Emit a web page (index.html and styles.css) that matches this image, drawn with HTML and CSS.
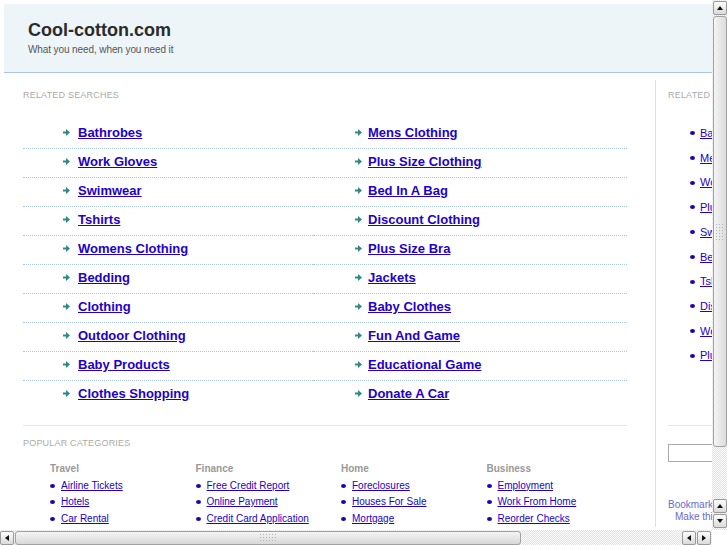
FILE: index.html
```html
<!DOCTYPE html>
<html lang="en">
<head>
    <meta charset="UTF-8">
    <title>Cool-cotton.com</title>
    <link rel="stylesheet" href="styles.css">
</head>
<body>
    <div class="page">
        <div class="header">
            <h1>Cool-cotton.com</h1>
            <p class="tagline">What you need, when you need it</p>
        </div>

        <div class="content">
            <div class="main">
                <div class="label">Related Searches</div>
                <ul class="links">
                    <li><svg class="arr" viewBox="0 0 7 7"><path d="M0 2.5h3V0l4 3.5L3 7V4.5H0z"/></svg><a href="#">Bathrobes</a></li>
                    <li><svg class="arr" viewBox="0 0 7 7"><path d="M0 2.5h3V0l4 3.5L3 7V4.5H0z"/></svg><a href="#">Mens Clothing</a></li>
                    <li><svg class="arr" viewBox="0 0 7 7"><path d="M0 2.5h3V0l4 3.5L3 7V4.5H0z"/></svg><a href="#">Work Gloves</a></li>
                    <li><svg class="arr" viewBox="0 0 7 7"><path d="M0 2.5h3V0l4 3.5L3 7V4.5H0z"/></svg><a href="#">Plus Size Clothing</a></li>
                    <li><svg class="arr" viewBox="0 0 7 7"><path d="M0 2.5h3V0l4 3.5L3 7V4.5H0z"/></svg><a href="#">Swimwear</a></li>
                    <li><svg class="arr" viewBox="0 0 7 7"><path d="M0 2.5h3V0l4 3.5L3 7V4.5H0z"/></svg><a href="#">Bed In A Bag</a></li>
                    <li><svg class="arr" viewBox="0 0 7 7"><path d="M0 2.5h3V0l4 3.5L3 7V4.5H0z"/></svg><a href="#">Tshirts</a></li>
                    <li><svg class="arr" viewBox="0 0 7 7"><path d="M0 2.5h3V0l4 3.5L3 7V4.5H0z"/></svg><a href="#">Discount Clothing</a></li>
                    <li><svg class="arr" viewBox="0 0 7 7"><path d="M0 2.5h3V0l4 3.5L3 7V4.5H0z"/></svg><a href="#">Womens Clothing</a></li>
                    <li><svg class="arr" viewBox="0 0 7 7"><path d="M0 2.5h3V0l4 3.5L3 7V4.5H0z"/></svg><a href="#">Plus Size Bra</a></li>
                    <li><svg class="arr" viewBox="0 0 7 7"><path d="M0 2.5h3V0l4 3.5L3 7V4.5H0z"/></svg><a href="#">Bedding</a></li>
                    <li><svg class="arr" viewBox="0 0 7 7"><path d="M0 2.5h3V0l4 3.5L3 7V4.5H0z"/></svg><a href="#">Jackets</a></li>
                    <li><svg class="arr" viewBox="0 0 7 7"><path d="M0 2.5h3V0l4 3.5L3 7V4.5H0z"/></svg><a href="#">Clothing</a></li>
                    <li><svg class="arr" viewBox="0 0 7 7"><path d="M0 2.5h3V0l4 3.5L3 7V4.5H0z"/></svg><a href="#">Baby Clothes</a></li>
                    <li><svg class="arr" viewBox="0 0 7 7"><path d="M0 2.5h3V0l4 3.5L3 7V4.5H0z"/></svg><a href="#">Outdoor Clothing</a></li>
                    <li><svg class="arr" viewBox="0 0 7 7"><path d="M0 2.5h3V0l4 3.5L3 7V4.5H0z"/></svg><a href="#">Fun And Game</a></li>
                    <li><svg class="arr" viewBox="0 0 7 7"><path d="M0 2.5h3V0l4 3.5L3 7V4.5H0z"/></svg><a href="#">Baby Products</a></li>
                    <li><svg class="arr" viewBox="0 0 7 7"><path d="M0 2.5h3V0l4 3.5L3 7V4.5H0z"/></svg><a href="#">Educational Game</a></li>
                    <li><svg class="arr" viewBox="0 0 7 7"><path d="M0 2.5h3V0l4 3.5L3 7V4.5H0z"/></svg><a href="#">Clothes Shopping</a></li>
                    <li><svg class="arr" viewBox="0 0 7 7"><path d="M0 2.5h3V0l4 3.5L3 7V4.5H0z"/></svg><a href="#">Donate A Car</a></li>
                </ul>

                <div class="popular">
                    <div class="label">Popular Categories</div>
                    <div class="cats">
                        <div class="cat">
                            <h4>Travel</h4>
                            <ul>
                                <li><a href="#">Airline Tickets</a></li>
                                <li><a href="#">Hotels</a></li>
                                <li><a href="#">Car Rental</a></li>
                            </ul>
                        </div>
                        <div class="cat">
                            <h4>Finance</h4>
                            <ul>
                                <li><a href="#">Free Credit Report</a></li>
                                <li><a href="#">Online Payment</a></li>
                                <li><a href="#">Credit Card Application</a></li>
                            </ul>
                        </div>
                        <div class="cat">
                            <h4>Home</h4>
                            <ul>
                                <li><a href="#">Foreclosures</a></li>
                                <li><a href="#">Houses For Sale</a></li>
                                <li><a href="#">Mortgage</a></li>
                            </ul>
                        </div>
                        <div class="cat">
                            <h4>Business</h4>
                            <ul>
                                <li><a href="#">Employment</a></li>
                                <li><a href="#">Work From Home</a></li>
                                <li><a href="#">Reorder Checks</a></li>
                            </ul>
                        </div>
                    </div>
                </div>
            </div>

            <div class="side">
                <div class="label">Related Searches</div>
                <ul class="side-links">
                    <li><a href="#">Bathrobes</a></li>
                    <li><a href="#">Mens Clothing</a></li>
                    <li><a href="#">Work Gloves</a></li>
                    <li><a href="#">Plus Size Clothing</a></li>
                    <li><a href="#">Swimwear</a></li>
                    <li><a href="#">Bed In A Bag</a></li>
                    <li><a href="#">Tshirts</a></li>
                    <li><a href="#">Discount Clothing</a></li>
                    <li><a href="#">Womens Clothing</a></li>
                    <li><a href="#">Plus Size Bra</a></li>
                </ul>
                <div class="search">
                    <input type="text" class="search-box">
                </div>
                <div class="bookmark">
                    <a href="#">Bookmark this page</a>
                    <a href="#" class="home">Make this your homepage</a>
                </div>
            </div>
        </div>
    </div>

    <!-- window scrollbars -->
    <div class="vscroll">
        <div class="btn"><span class="up"></span></div>
        <div class="thumb"><span class="grip"></span></div>
        <div class="track"></div>
        <div class="btn"><span class="up"></span></div>
        <div class="btn"><span class="down"></span></div>
    </div>
    <div class="hscroll">
        <div class="btn"><span class="left"></span></div>
        <div class="thumb"><span class="grip"></span></div>
        <div class="track"></div>
        <div class="btn"><span class="left"></span></div>
        <div class="btn"><span class="right"></span></div>
    </div>
    <div class="corner"></div>
</body>
</html>
```

FILE: styles.css
```css
body {
    margin: 0;
    font-family: "Liberation Sans", Arial, sans-serif;
    background: #fff;
    color: #333;
    overflow: hidden;
}
ul {
    list-style: none;
    margin: 0;
    padding: 0;
}
a {
    color: #2200cc;
}
.page {
    width: 900px;
    padding: 4px 0 0 4px;
}

/* header */
.header {
    background: #eef5f8;
    border-bottom: 1px solid #a9c4ea;
    height: 53px;
    padding: 15px 0 0 24px;
}
.header h1 {
    margin: 0;
    font-size: 18px;
    line-height: 22px;
    color: #2b2b2b;
}
.tagline {
    margin: 3px 0 0;
    font-size: 10px;
    line-height: 12px;
    letter-spacing: -0.1px;
    color: #555;
}

.content {
    display: flex;
    margin-top: 7px;
}
.label {
    font-size: 9px;
    line-height: 11px;
    text-transform: uppercase;
    letter-spacing: 0.2px;
    color: #aaa;
}

/* main column */
.main {
    width: 652px;
    box-sizing: border-box;
    padding: 10px 28px 0 19px;
    border-right: 1px solid #d6e2f0;
}
.links {
    display: grid;
    grid-template-columns: 290px 314px;
    margin: 19px 0 16px;
}
.links li {
    display: flex;
    align-items: center;
    padding: 5px 0 8px 40px;
    line-height: 15px;
    border-bottom: 1px dotted #a9c8ea;
    font-size: 13px;
    font-weight: bold;
}
.links li:nth-child(even) {
    padding-left: 42px;
}
.links li:nth-child(even) .arr {
    margin-right: 6px;
}
.links li:nth-last-child(-n+2) {
    border-bottom: none;
}
.arr {
    width: 7px;
    height: 7px;
    margin-right: 8px;
    fill: #2f8a86;
}

.popular {
    border-top: 1px solid #dfe8f1;
    padding-top: 12px;
}
.popular .label {
    margin-bottom: 13px;
}
.cats {
    display: grid;
    grid-template-columns: repeat(4, 145.5px);
    padding-left: 27px;
}
.cat h4 {
    margin: 0;
    font-size: 10px;
    line-height: 14px;
    color: #999;
}
.cat ul {
    margin-top: 1.5px;
}
.cat li, .side-links li {
    display: flex;
    align-items: center;
    font-size: 10px;
    line-height: 16.5px;
}
.cat li::before, .side-links li::before {
    content: "";
    width: 5px;
    height: 4px;
    margin-right: 6px;
    border-radius: 50%;
    background: #2200aa;
}

/* side column */
.side {
    width: 220px;
    padding: 10px 0 0 12px;
}
.side-links {
    margin: 20px 0 57px;
}
.side-links li {
    font-size: 11px;
    line-height: 24.7px;
    padding-left: 22px;
}
.side-links li::before {
    margin-right: 5px;
}
.search {
    border-top: 1px solid #dfe8f1;
    padding-top: 18px;
}
.search-box {
    display: block;
    width: 150px;
    height: 18px;
    box-sizing: border-box;
    margin: 0;
    border: 1px solid #aaa;
}
.bookmark {
    margin-top: 37px;
    font-size: 10px;
    line-height: 12px;
}
.bookmark a {
    display: block;
    color: #6a6acc;
    text-decoration: none;
}
.bookmark .home {
    padding-left: 7px;
}

/* scrollbars */
.vscroll, .hscroll {
    position: fixed;
    display: flex;
    background: repeating-conic-gradient(#e2e2e2 0 25%, #fbfbfb 0 50%) 0 0 / 2px 2px;
}
.vscroll {
    top: 0;
    right: 0;
    width: 15px;
    height: 530px;
    flex-direction: column;
    align-items: center;
    padding-top: 1px;
    box-sizing: border-box;
}
.hscroll {
    left: 0;
    bottom: 0;
    width: 712px;
    height: 15px;
    align-items: center;
}
.corner {
    position: fixed;
    right: 0;
    bottom: 0;
    width: 15px;
    height: 15px;
    background: #fff;
}
.btn {
    width: 12px;
    height: 12px;
    flex: none;
    display: flex;
    align-items: center;
    justify-content: center;
    border: 1px solid #9a9a9a;
    border-radius: 2px;
    background: linear-gradient(#fdfdfd, #dadada);
}
.vscroll .btn:nth-last-child(2) {
    margin-bottom: 1px;
}
.vscroll .btn:last-child {
    margin-bottom: 2px;
}
.hscroll .btn:nth-last-child(2) {
    margin-right: 1px;
}
.hscroll .btn:last-child {
    margin-right: 1px;
}
.up, .down, .left, .right {
    width: 0;
    height: 0;
    border: 3px solid transparent;
}
.up { border-bottom: 4px solid #111; border-top: 0; }
.down { border-top: 4px solid #111; border-bottom: 0; }
.left { border-right: 4px solid #111; border-left: 0; }
.right { border-left: 4px solid #111; border-right: 0; }

.thumb {
    flex: none;
    display: flex;
    align-items: center;
    justify-content: center;
    border: 1px solid #a2a2a2;
    border-radius: 3px;
    box-sizing: border-box;
}
.vscroll .thumb {
    width: 14px;
    height: 431px;
    margin-top: 1px;
    background: linear-gradient(to right, #f4f4f4, #dcdcdc);
}
.hscroll .thumb {
    width: 506px;
    height: 14px;
    margin-left: 1px;
    background: linear-gradient(#f4f4f4, #d8d8d8);
}
.grip {
    background: radial-gradient(circle, #b4b4b4 0.7px, transparent 0.8px) 0 0 / 3px 3px;
}
.vscroll .grip {
    width: 9px;
    height: 18px;
}
.hscroll .grip {
    width: 18px;
    height: 9px;
}
.track {
    flex: 1;
}
```
